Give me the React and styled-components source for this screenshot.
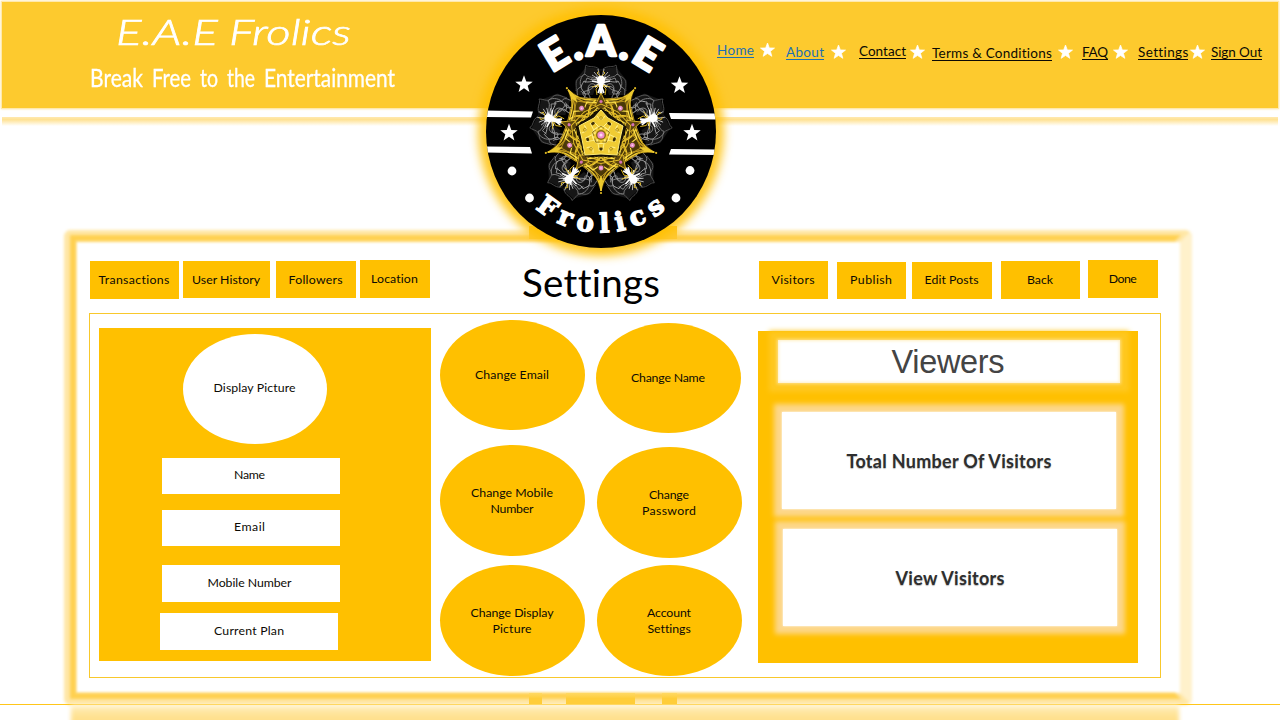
import React, { useLayoutEffect, useRef } from "react";
import styled, { createGlobalStyle } from "styled-components";

const AMBER = "#ffc000";

const GlobalStyle = createGlobalStyle`
  * { box-sizing: border-box; }
  body { margin: 0; background: #fff; overflow: hidden; }
`;

const Page = styled.div`
  position: relative;
  width: 1280px;
  height: 720px;
  overflow: hidden;
  background: #fff;
  color: #0c0a04;
  font-family: Lato, "Noto Sans", sans-serif;
`;

/* ---------- text fitted to a set width ---------- */
const FitBox = styled.span`
  display: block;
  flex: none;
  width: ${(p) => p.$w}px;
  white-space: nowrap;
`;
const FitInner = styled.span`
  display: inline-block;
  transform-origin: 0 50%;
`;

function Fit({ w, squeeze, children, ...rest }) {
  const ref = useRef(null);
  useLayoutEffect(() => {
    const el = ref.current;
    el.style.letterSpacing = "0px";
    el.style.transform = "none";
    const natural = el.getBoundingClientRect().width;
    if (squeeze) el.style.transform = `scaleX(${w / natural})`;
    else el.style.letterSpacing = `${(w - natural) / (children.length - 1)}px`;
  }, [w, squeeze, children]);
  return (
    <FitBox $w={w} {...rest}>
      <FitInner ref={ref}>{children}</FitInner>
    </FitBox>
  );
}

/* ---------- header ---------- */
const Header = styled.header`
  display: flex;
  justify-content: space-between;
  height: 108px;
  margin: 1px 1px 0;
  background: #fdca2e;
  border: 1px solid #ffe9ac;
  box-shadow: 0 0 2px #ffe08a;
`;
const Brand = styled.div`
  padding: 4px 0 0 88px;
  color: #fff;
`;
const BrandName = styled.div`
  display: flex;
  gap: 11px;
  padding-left: 26px;
  font-size: 36px;
  line-height: 50px;
  font-weight: 300;
  font-style: italic;
  -webkit-text-stroke: 0.7px #fff;
`;
const Tagline = styled.div`
  display: flex;
  gap: 9px;
  font-size: 25px;
  line-height: 38px;
  margin-top: 2px;
  -webkit-text-stroke: 0.3px #fff;
`;
const Nav = styled.nav`
  display: flex;
  align-items: flex-start;
  padding: 41px 16px 0 0;
`;
const NavLink = styled.a`
  margin-left: ${(p) => p.$gap || 0}px;
  margin-top: ${(p) => p.$drop}px;
  height: 15px;
  line-height: 14px;
  font-size: 13.5px;
  color: ${(p) => (p.$visited ? "#1f6fb0" : "#0c0a04")};
  border-bottom: 1px solid currentColor;
`;
const StarBox = styled.svg`
  flex: none;
  width: 15px;
  height: 14px;
  margin-left: ${(p) => p.$gap}px;
  margin-top: ${(p) => p.$drop}px;
`;
const HeaderEcho = styled.div`
  height: 9px;
  margin: 8px 2px 0;
  background: linear-gradient(#ffe9b0, #ffe294 30%, #fff);
`;

const STAR = "0,-10 2.5,-3.3 9.5,-3.1 4,1.3 5.9,8.1 0,4.2 -5.9,8.1 -4,1.3 -9.5,-3.1 -2.5,-3.3";

function NavStar({ gap, drop }) {
  return (
    <StarBox $gap={gap} $drop={drop} viewBox="-10 -10 20 19">
      <polygon points={STAR} fill="#fff" stroke="#fff" strokeWidth="1" />
    </StarBox>
  );
}

/* ---------- framed area ---------- */
const Frame = styled.main`
  position: relative;
  width: 1130px;
  height: 476px;
  margin: 103px 0 0 63px;
  padding: 31px 0 0 26px;
  &::before {
    content: "";
    position: absolute;
    inset: 1px 1px 0;
    border: 12px solid #ffe7a6;
    border-right-color: #fff1cb;
    border-radius: 7px;
    filter: blur(1.4px);
  }
  &::after {
    content: "";
    position: absolute;
    inset: 6px 12px 6px 7px;
    border: 6px solid #ffd050;
    border-right-color: transparent;
    filter: blur(1.6px);
  }
`;
const Tabs = styled.div`
  position: absolute;
  left: 466px;
  ${(p) => (p.$bottom ? "bottom: 1px;" : "top: -3px;")}
  width: 148px;
  height: ${(p) => (p.$bottom ? 11 : 13)}px;
  z-index: 1;
  display: flex;
  background: ${(p) => (p.$bottom ? "none" : "#ffc933")};
`;
const Tab = styled.div`
  width: ${(p) => p.$w}px;
  margin-left: ${(p) => p.$gap || 0}px;
  background: linear-gradient(#ffd964, #ffcd39 50%);
`;
const Content = styled.div`
  position: relative;
  z-index: 2;
`;
const Toolbar = styled.div`
  display: flex;
  align-items: flex-start;
  height: 53px;
  padding-left: 1px;
`;
const Button = styled.button`
  display: flex;
  align-items: center;
  justify-content: center;
  flex: none;
  width: ${(p) => p.$w}px;
  height: ${(p) => p.$h || 38}px;
  margin: ${(p) => p.$drop ?? 1}px 0 0 ${(p) => p.$gap || 0}px;
  padding: 0 1px ${(p) => p.$lift || 0}px 0;
  border: 0;
  background: ${AMBER};
  color: inherit;
  font: 12.3px/16px Lato, sans-serif;
`;
const Title = styled.h1`
  margin: -2px 0 0 92px;
  font-size: 38.5px;
  line-height: 48px;
  font-weight: 400;
  color: #000;
`;
const Board = styled.section`
  display: flex;
  align-items: flex-start;
  width: 1072px;
  height: 365px;
  border: 1px solid #f8c82c;
  font-size: 12.3px;
  line-height: 16px;
`;
const Profile = styled.div`
  display: flex;
  flex-direction: column;
  width: 332px;
  height: 333px;
  margin: 14px 0 0 9px;
  padding: 6px 0 0 63px;
  background: ${AMBER};
`;
const Oval = styled.div`
  display: flex;
  flex-direction: column;
  align-items: center;
  justify-content: center;
  width: ${(p) => p.$w || 145}px;
  height: ${(p) => p.$h || 111}px;
  margin: ${(p) => p.$m || 0};
  padding: 0 1px ${(p) => p.$lift ?? 0}px 0;
  border-radius: 50%;
  background: ${(p) => (p.$plain ? "#fff" : AMBER)};
`;
const Field = styled.div`
  display: flex;
  align-items: center;
  justify-content: center;
  width: 178px;
  height: ${(p) => p.$h}px;
  margin: ${(p) => p.$top}px 0 0 ${(p) => p.$shift || 0}px;
  padding: 0 ${(p) => (p.$shift ? 0 : 3)}px 2px 0;
  background: #fff;
`;
const Column = styled.div`
  display: flex;
  flex-direction: column;
  margin: ${(p) => p.$top}px 0 0 ${(p) => p.$left}px;
`;
const Viewers = styled.div`
  display: flex;
  flex-direction: column;
  width: 380px;
  height: 332px;
  margin: 17px 0 0 16px;
  padding: 9px 0 0 20px;
  background: ${AMBER};
`;
const ViewersTitle = styled.h2`
  display: flex;
  align-items: center;
  justify-content: center;
  flex: none;
  width: 342px;
  height: 43px;
  margin: 0;
  padding: 1px 2px 0 0;
  background: #fff;
  box-shadow: inset 0 0 3px 1px #fff0c4, 0 0 3px 1px #ffe18a, 0 0 5px 9px #ffc820;
  font: 400 32.5px/36px "Liberation Sans", Arial, sans-serif;
  color: #444;
`;
const Card = styled.div`
  display: flex;
  align-items: center;
  justify-content: center;
  flex: none;
  width: 334px;
  height: 97px;
  margin: ${(p) => p.$top}px 0 0 ${(p) => p.$left}px;
  background: #fff;
  box-shadow: 0 0 2px #fff, 0 0 5px 8px #fdd78a;
  font-size: 18px;
  font-weight: 700;
  color: #2e2e2e;
  text-shadow: 0 1px 1px #bbb;
`;
const Rule = styled.div`
  position: relative;
  height: 1px;
  margin-top: -1px;
  background: #ffc61a;
`;
const FrameEcho = styled.div`
  width: 1108px;
  height: 24px;
  margin-left: 71px;
  background: linear-gradient(#fff3d2, #ffe7a3 6px, #ffe08c 14px);
  filter: blur(2px);
`;

/* ---------- round emblem ---------- */
const Emblem = styled.div`
  position: absolute;
  z-index: 3;
  left: 486px;
  top: 15px;
  width: 230px;
  height: 233px;
  border-radius: 50%;
  background: #000;
  box-shadow: 0 0 10px 8px rgba(255, 192, 0, 0.85);
  svg { display: block; overflow: visible; }
`;

function Petal() {
  const half = (
    <g fill="none">
      <path d="M-2,-66 C-7,-70 -12,-67 -15,-70 C-17,-65 -14,-60 -21,-58 C-27,-55 -24,-48 -25,-44" stroke="#4c4c4c" strokeWidth=".9" />
      <path d="M0,-53 C-7,-60 -13,-56 -16,-61 C-20,-60 -22,-52 -20,-48 C-27,-46 -22,-40 -24,-36" stroke="#777" strokeWidth=".9" />
      <path d="M0,-53 C-7,-56 -13,-51 -17,-54 C-19,-50 -22,-48 -17,-43 C-13,-39 -20,-37 -16,-33" stroke="#aaa" strokeWidth=".9" />
      <path d="M0,-53 C-8,-50 -8,-45 -15,-44 S-16,-36 -10,-36 M-3,-51 C-6,-46 -12,-51 -13,-45 S-9,-40 -12,-34" stroke="#888" strokeWidth="1" />
      <path d="M-6,-50 C-10,-54 -15,-48 -12,-44 S-18,-40 -20,-44 M-9,-55 L-14,-57 L-16,-52" stroke="#999" strokeWidth=".8" />
      <path d="M-1,-55 L-9,-60 M-1,-56 L-7,-63 M-1,-57 L-3,-66 M-1,-55 L-10,-56" stroke="#bdbdbd" strokeWidth=".9" />
      <path d="M0,-52 L-9,-54 M0,-52 L-6,-48 M0,-53 L-5,-58 M0,-50 L-3,-42" stroke="#fff" strokeWidth="1.6" />
      <path d="M-1,-50 L-5,-46 L-4,-40 M-1,-59 L-4,-62 L-2,-64 M-2,-50 L-9,-48" stroke="#e5bd22" strokeWidth=".9" />
      <path d="M-15,-68 L-26,-54 L-24,-40 L-8,-40 L0,-66 Z" fill="#aaa" opacity=".13" />
    </g>
  );
  return (
    <g>
      {half}
      <g transform="scale(-1 1)">{half}</g>
      <ellipse cx="0" cy="-55" rx="4" ry="4.5" fill="#fff" />
      <path d="M-2.4,-53 L2.4,-53 L1.4,-41 L-1.4,-41 Z" fill="#fff" />
    </g>
  );
}

function Spike() {
  const half = (
    <g fill="none">
      <path d="M0,56 C-1,44 -9,36 -17,31 C-11,32 -6,30 0,22" stroke="#f0cb2e" strokeWidth="1.4" />
      <path d="M0,50 C-4,42 -2,39 -8,35 S-4,25 0,22" stroke="#d8b024" strokeWidth="1" />
      <path d="M0,46 C-6,39 -7,28 -18,25 M0,42 L-24,19 M-3,44 L-21,29" stroke="#b8921c" strokeWidth=".9" />
      <path d="M-19,26 C-12,21 -6,26 0,20 M-19,26 L-8,35 L0,30" stroke="#ffe34d" strokeWidth="1.1" />
    </g>
  );
  return (
    <g>
      <path d="M0,57 L-7,39 L-19,27 L0,20 L19,27 L7,39 Z" fill="#4a3808" />
      {half}
      <g transform="scale(-1 1)">{half}</g>
      <path d="M0,56 L-2,46 L0,40 L2,46 Z" fill="#ecc92e" />
      <circle cy="58" r="1.1" fill="#e5bd22" />
    </g>
  );
}

const TURNS = [0, 72, 144, 216, 288];

function Mandala() {
  return (
    <g transform="translate(115 120)">
      {TURNS.map((a) => (
        <g key={a} transform={`rotate(${a})`}><Petal /></g>
      ))}
      {TURNS.map((a) => (
        <g key={a} transform={`rotate(${a})`}><Spike /></g>
      ))}
      {TURNS.map((a) => (
        <g key={a} transform={`rotate(${a})`}>
          <path d="M0,-42 L-6,-29 L0,-25 L6,-29 Z" fill="#5b450d" stroke="#dcb528" strokeWidth=".9" />
          <path d="M-15,-21 L15,-21 L0,-26 Z M-17,-23 L0,-31 L17,-23" fill="none" stroke="#e2bb29" strokeWidth="1" />
        </g>
      ))}
      <polygon points="0,-27 25.7,-8.3 15.9,21.8 -15.9,21.8 -25.7,-8.3" fill="#171103" />
      <polygon points="0,-25 7,-17 22,-9 19,4 16,20 0,19 -16,20 -19,4 -22,-9 -7,-17" fill="#efcb33" stroke="#ffed76" strokeWidth="1" strokeLinejoin="round" />
      {TURNS.map((a) => (
        <g key={a} transform={`rotate(${a})`} fill="none">
          <path d="M-6,-6 Q0,-12 6,-6 M-8,-14 L0,-6 L8,-14 M-4,-19 Q0,-12 4,-19" stroke="#fff08a" strokeWidth="1" />
          <path d="M-3,-6.5 L0,-9 L3,-6.5" stroke="#826510" strokeWidth=".8" />
          <circle cy="-17" r="1.4" stroke="#9b7c13" strokeWidth=".7" />
          <ellipse cy="14" rx="2.2" ry="1.4" fill="#3f3007" />
          <circle cy="33" r="3.3" fill="#5c4710" />
          <circle cy="33" r="2.4" fill="#e88fcb" />
          <circle cy="33" r=".8" fill="#ffd4f3" />
          <circle cy="-33.5" r="1.6" fill="#d573b4" />
        </g>
      ))}
      <circle r="5" fill="#8b6c15" />
      <circle r="3.6" fill="#f08ccd" />
      <circle r="1.6" fill="#ffd9f4" />
    </g>
  );
}

function EmblemArt() {
  return (
    <svg width="230" height="233" viewBox="0 0 230 233">
      <defs>
        <clipPath id="disc"><ellipse cx="115" cy="116.5" rx="115" ry="116.5" /></clipPath>
        <path id="arcTop" d="M39.5,116.5 A75.5,75.5 0 0 1 190.5,116.5" />
        <path id="arcBottom" d="M14,116.5 A101,101 0 0 0 216,116.5" />
      </defs>
      <g clipPath="url(#disc)" fill="#fff">
        <path d="M0,95.5 L47,96.5 L45,102.5 L0,102 Z M0,131.5 L44,132 L46,138.5 L0,137.5 Z" />
        <path d="M183,98 L230,98.5 V104.5 L185,104 Z M185,134 L230,134.5 V140 L183,139.5 Z" />
      </g>
      <Mandala />
      <g fill="#fff">
        <polygon points={STAR} transform="translate(38 69.5) scale(.92)" />
        <polygon points={STAR} transform="translate(193.5 70.5) scale(.92)" />
        <polygon points={STAR} transform="translate(23 118) scale(.92)" />
        <polygon points={STAR} transform="translate(206 118) scale(.92)" />
        <circle cx="26" cy="156" r="4.4" />
        <circle cx="204" cy="155.5" r="4.4" />
        <circle cx="43.5" cy="183" r="4.4" />
        <circle cx="190" cy="183" r="4.4" />
        <text fontFamily="Lato, sans-serif" fontWeight="900" fontSize="42" textAnchor="middle" stroke="#fff" strokeWidth="2.4" strokeLinejoin="round">
          <textPath href="#arcTop" startOffset="50%" textLength="106" lengthAdjust="spacing">E.A.E</textPath>
        </text>
        <text fontFamily="DejaVu Serif, serif" fontWeight="700" fontSize="26" textAnchor="middle" stroke="#fff" strokeWidth="1.4">
          <textPath href="#arcBottom" startOffset="49.8%" textLength="142" lengthAdjust="spacing">Frolics</textPath>
        </text>
      </g>
    </svg>
  );
}

export default function App() {
  return (
    <Page>
      <GlobalStyle />
      <Header>
        <Brand>
          <BrandName>
            <Fit squeeze w={102}>E.A.E</Fit>
            <Fit squeeze w={122}>Frolics</Fit>
          </BrandName>
          <Tagline>
            <Fit squeeze w={53}>Break</Fit>
            <Fit squeeze w={39}>Free</Fit>
            <Fit squeeze w={18}>to</Fit>
            <Fit squeeze w={28}>the</Fit>
            <Fit squeeze w={131}>Entertainment</Fit>
          </Tagline>
        </Brand>
        <Nav>
          <NavLink $visited $drop={0}><Fit w={37}>Home</Fit></NavLink>
          <NavStar gap={6} drop={0} />
          <NavLink $visited $gap={11} $drop={2}><Fit w={38}>About</Fit></NavLink>
          <NavStar gap={7} drop={2} />
          <NavLink $gap={13} $drop={1}><Fit w={47}>Contact</Fit></NavLink>
          <NavStar gap={4} drop={2} />
          <NavLink $gap={7} $drop={3}><Fit w={120}>Terms &amp; Conditions</Fit></NavLink>
          <NavStar gap={6} drop={2} />
          <NavLink $gap={9} $drop={2}><Fit w={26}>FAQ</Fit></NavLink>
          <NavStar gap={5} drop={2} />
          <NavLink $gap={10} $drop={2}><Fit w={50}>Settings</Fit></NavLink>
          <NavStar gap={2} drop={2} />
          <NavLink $gap={6} $drop={2}><Fit w={51}>Sign Out</Fit></NavLink>
        </Nav>
      </Header>
      <HeaderEcho />

      <Frame>
        <Tabs />
        <Tabs $bottom><Tab $w={13} /><Tab $w={69} $gap={24} /><Tab $w={15} $gap={27} /></Tabs>
        <Content>
          <Toolbar>
            <Button $w={89}><Fit w={71}>Transactions</Fit></Button>
            <Button $w={87} $h={37} $gap={4}><Fit w={68}>User History</Fit></Button>
            <Button $w={80} $h={37} $gap={6}><Fit w={54}>Followers</Fit></Button>
            <Button $w={70} $gap={4} $drop={0}><Fit w={47}>Location</Fit></Button>
            <Title><Fit w={137}>Settings</Fit></Title>
            <Button $w={69} $gap={100}><Fit w={43}>Visitors</Fit></Button>
            <Button $w={69} $h={37} $gap={9} $drop={2} $lift={2}><Fit w={42}>Publish</Fit></Button>
            <Button $w={80} $h={37} $gap={6} $drop={2} $lift={2}><Fit w={54}>Edit Posts</Fit></Button>
            <Button $w={79} $gap={9}><Fit w={26}>Back</Fit></Button>
            <Button $w={70} $gap={8} $drop={0}><Fit w={28}>Done</Fit></Button>
          </Toolbar>
          <Board>
            <Profile>
              <Oval $plain $w={144} $h={110} $m="0 0 0 21px" $lift={2}><Fit w={82}>Display Picture</Fit></Oval>
              <Field $h={36} $top={14}><Fit w={31}>Name</Fit></Field>
              <Field $h={36} $top={16}><Fit w={31}>Email</Fit></Field>
              <Field $h={37} $top={19}><Fit w={84}>Mobile Number</Fit></Field>
              <Field $h={37} $top={11} $shift={-2}><Fit w={70}>Current Plan</Fit></Field>
            </Profile>
            <Column $top={6} $left={9}>
              <Oval $h={110}><Fit w={74}>Change Email</Fit></Oval>
              <Oval $m="15px 0 9px"><Fit w={82}>Change Mobile</Fit><Fit w={43}>Number</Fit></Oval>
              <Oval $lift={0}><Fit w={83}>Change Display</Fit><Fit w={39}>Picture</Fit></Oval>
            </Column>
            <Column $top={9} $left={11}>
              <Oval $h={110}><Fit w={74}>Change Name</Fit></Oval>
              <Oval $m="14px 0 7px 1px"><Fit w={40}>Change</Fit><Fit w={54}>Password</Fit></Oval>
              <Oval $m="0 0 0 1px" $lift={0}><Fit w={44}>Account</Fit><Fit w={43}>Settings</Fit></Oval>
            </Column>
            <Viewers>
              <ViewersTitle><Fit w={113}>Viewers</Fit></ViewersTitle>
              <Card $top={29} $left={4}><Fit w={205}>Total Number Of Visitors</Fit></Card>
              <Card $top={20} $left={5}><Fit w={109}>View Visitors</Fit></Card>
            </Viewers>
          </Board>
        </Content>
      </Frame>
      <Rule />
      <FrameEcho />

      <Emblem><EmblemArt /></Emblem>
    </Page>
  );
}
